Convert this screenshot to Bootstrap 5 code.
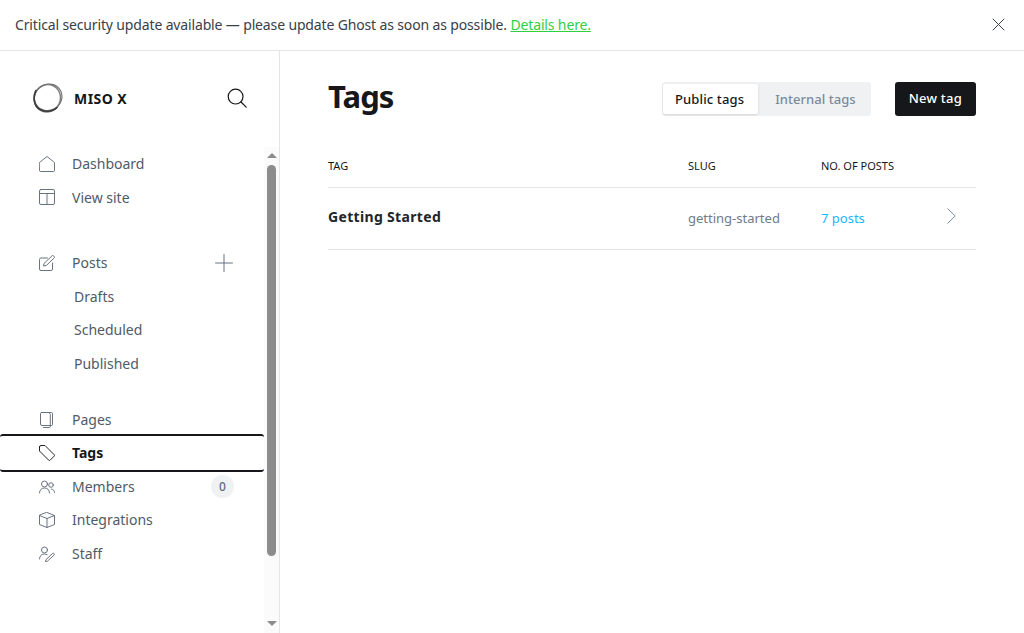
<!DOCTYPE html>
<html lang="en">
<head>
  <meta charset="UTF-8" />
  <meta name="viewport" content="width=device-width, initial-scale=1.0" />
  <title>Tags - MISO X</title>
  <link rel="stylesheet" href="https://cdn.jsdelivr.net/npm/bootstrap@5.3.0/dist/css/bootstrap.min.css" />
  <style>
    html, body {
      height: 100%;
    }
    body {
      font-family: "Noto Sans", "Open Sans", sans-serif;
      font-size: 14px;
      color: #15171a;
      background-color: #fff;
      overflow: hidden;
    }
    svg {
      display: block;
      fill: none;
      stroke-linecap: round;
      stroke-linejoin: round;
    }
    .update-bar {
      height: 51px;
      padding: 0 19px 1px 15px;
      border-bottom: 1px solid #e3e5e7;
      color: #394047;
      letter-spacing: -.145px;
    }
    .update-bar a {
      color: #30cf43;
    }
    .app-shell {
      height: 582px;
    }
    .side-panel {
      width: 280px;
      border-right: 1px solid #e3e5e7;
    }
    .side-inner {
      width: 264px;
    }
    .brand-row {
      height: 95.75px;
      padding: 0 17px 1px 32px;
    }
    .brand-name {
      font-weight: 700;
      font-size: 14px;
      margin-left: 10px;
      letter-spacing: .45px;
    }
    .side-link {
      height: 33.5px;
      padding-left: 39px;
      padding-right: 31px;
      color: #4f5b66;
      text-decoration: none;
    }
    .side-link svg {
      stroke: #626d79;
      stroke-width: .95;
      margin-right: 17px;
      flex: none;
    }
    .side-sub {
      padding-left: 74px;
    }
    .side-link.is-active {
      color: #15171a;
      font-weight: 700;
      border-top: 2px solid #15171a;
      border-bottom: 2px solid #15171a;
      border-radius: 3px;
      height: 37.5px;
      margin: -2px 0;
      padding-bottom: 1px;
      position: relative;
    }
    .side-link.is-active svg {
      stroke: #15171a;
    }
    .side-link.nudge-up {
      padding-bottom: 1px;
    }
    .side-gap {
      height: 32px;
    }
    .side-gap-low {
      height: 23px;
    }
    .count-pill {
      width: 23px;
      height: 23px;
      margin-right: -1px;
      border-radius: 50%;
      background-color: #eff1f3;
      font-size: 12px;
      color: #626d79;
      font-weight: 500;
    }
    .scroll-rail {
      width: 15px;
      margin-top: 96px;
      padding-top: 6px;
      background-color: #fbfbfb;
    }
    .scroll-up {
      width: 0;
      height: 0;
      border-left: 5px solid transparent;
      border-right: 5px solid transparent;
      border-bottom: 5px solid #8c8c8c;
      margin: 0 0 7px 3px;
    }
    .scroll-thumb {
      width: 9px;
      height: 391px;
      border-radius: 5px;
      background-color: #8c8c8c;
      margin-left: 3px;
    }
    .scroll-down {
      width: 0;
      height: 0;
      border-left: 5px solid transparent;
      border-right: 5px solid transparent;
      border-top: 5px solid #8c8c8c;
      margin: 65px 0 0 3px;
    }
    .main-area {
      padding: 31px 48px 0;
    }
    .page-title {
      font-size: 31px;
      font-weight: 700;
      letter-spacing: -.9px;
      line-height: 28px;
      margin: 0;
      align-self: flex-start;
    }
    .type-switch {
      background-color: #eff1f3;
      border-radius: 3px;
      padding: 2px 0 2px 1px;
      height: 34px;
      margin-right: 24px;
      font-size: 13px;
      font-weight: 500;
      letter-spacing: .13px;
    }
    .type-switch span {
      padding: 0 15px 0 17px;
      line-height: 30px;
      color: #7c8b9a;
      letter-spacing: .04px;
    }
    .type-switch span.is-on {
      background-color: #fff;
      color: #15171a;
      border-radius: 2px;
      box-shadow: 0 1px 3px rgba(0,0,0,.12);
      padding: 0 14px 0 12px;
      letter-spacing: .13px;
    }
    .btn.new-tag {
      background-color: #15171a;
      color: #fff;
      height: 34px;
      padding: 0 14px;
      font-size: 13px;
      font-weight: 500;
      letter-spacing: .24px;
      border: 0;
      border-radius: 3px;
    }
    .tag-table {
      table-layout: fixed;
      margin-top: 32px;
      margin-bottom: 0;
      --bs-table-border-color: #e3e5e7;
    }
    .tag-table th {
      font-size: 11px;
      font-weight: 400;
      height: 39px;
      padding: 0 0 2px;
      vertical-align: middle;
      text-transform: uppercase;
      color: #15171a;
    }
    .tag-table td {
      height: 62px;
      padding: 0;
      vertical-align: middle;
    }
    .tag-table td.lift-cell {
      padding-bottom: 4px;
    }
    .tag-name {
      font-size: 14px;
      font-weight: 700;
      letter-spacing: .33px;
    }
    .tag-slug {
      font-size: 13px;
      color: #6f7b88;
    }
    .tag-count {
      font-size: 13px;
      color: #14b8ff;
      text-decoration: none;
    }
    .tag-go svg {
      stroke: #7c8b9a;
      margin-left: auto;
      margin-right: 20px;
    }
  </style>
</head>
<body>
  <div class="update-bar d-flex align-items-center justify-content-between">
    <div>Critical security update available — please update Ghost as soon as possible. <a href="#">Details here.</a></div>
    <svg width="13" height="13" viewBox="0 0 13 13" stroke="#394047" stroke-width="1"><path d="M1 1l11 11M12 1L1 12"/></svg>
  </div>

  <div class="app-shell d-flex">
    <aside class="side-panel d-flex flex-shrink-0">
      <div class="side-inner flex-shrink-0">
        <div class="brand-row d-flex align-items-center">
          <svg width="32" height="32" viewBox="0 0 32 32">
            <ellipse cx="15.500" cy="16.500" rx="13" ry="13.800" stroke="#808080" stroke-width="1.500" transform="rotate(25 16 16)"/>
            <ellipse cx="16.500" cy="15.500" rx="14" ry="13" stroke="#6e6e6e" stroke-width="1.100" transform="rotate(-30 16 16)"/>
            <path d="M4 8.500C.8 14 1.500 24 8 27.500c5 2.700 13 2.500 17-2" stroke="#3d3d3d" stroke-width="1.600"/>
          </svg>
          <span class="brand-name">MISO X</span>
          <svg class="ms-auto" width="20" height="20" viewBox="0 0 20 20" stroke="#15171a" stroke-width="1.2"><circle cx="8.600" cy="8.600" r="7.400"/><path d="M14 14l5.200 5.200"/></svg>
        </div>

        <nav class="d-flex flex-column">
          <a class="side-link d-flex align-items-center" href="#">
            <svg width="16" height="16" viewBox="0 0 16 16"><path d="M.5 6.500L8 .5l7.500 6v8a1 1 0 0 1-1 1h-13a1 1 0 0 1-1-1z"/></svg>Dashboard
          </a>
          <a class="side-link d-flex align-items-center" href="#">
            <svg width="16" height="16" viewBox="0 0 16 16"><rect x=".5" y=".5" width="15" height="15" rx="1.500"/><path d="M.5 4.500h15M8 4.500v11"/></svg>View site
          </a>
          <div class="side-gap"></div>
          <a class="side-link d-flex align-items-center" href="#">
            <svg width="16" height="16" viewBox="0 0 16 16"><path d="M8.500 3H2a1.500 1.500 0 0 0-1.500 1.500v9.500A1.500 1.500 0 0 0 2 15.500h10a1.500 1.500 0 0 0 1.500-1.500V8"/><path d="M7 10.500l-2.500.5.500-2.500L13 .8a1 1 0 0 1 1.500 0l.7.700a1 1 0 0 1 0 1.500z"/></svg>Posts
            <svg class="ms-auto me-0" width="18" height="18" viewBox="0 0 18 18"><path d="M9 .5v17M.5 9h17"/></svg>
          </a>
          <a class="side-link side-sub d-flex align-items-center" href="#">Drafts</a>
          <a class="side-link side-sub d-flex align-items-center" href="#">Scheduled</a>
          <a class="side-link side-sub d-flex align-items-center" href="#">Published</a>
          <div class="side-gap-low"></div>
          <a class="side-link d-flex align-items-center" href="#">
            <svg width="16" height="16" viewBox="0 0 16 16"><path d="M2.500.5h10a1 1 0 0 1 1 1v11a1 1 0 0 1-1 1H3a1.500 1.500 0 0 1-1.500-1.500V1.500a1 1 0 0 1 1-1z"/><path d="M10 .8l1.300 1.400v12.300a1 1 0 0 1-1 1H4.500"/></svg>Pages
          </a>
          <a class="side-link is-active d-flex align-items-center" href="#">
            <svg width="16" height="16" viewBox="0 0 16 16"><path d="M.5 2v4L9.700 15.200a1 1 0 0 0 1.400 0l4.100-4.100a1 1 0 0 0 0-1.400L6 .5H2A1.500 1.500 0 0 0 .5 2z"/></svg>Tags
          </a>
          <a class="side-link d-flex align-items-center" href="#">
            <svg width="16" height="16" viewBox="0 0 16 16"><circle cx="5.500" cy="5" r="3"/><path d="M.5 14c0-3 2-5 5-5s5 2 5 5"/><circle cx="12" cy="6" r="2.300"/><path d="M12.500 10c1.800.2 3 1.800 3 3.500"/></svg>Members
            <span class="count-pill ms-auto d-flex align-items-center justify-content-center">0</span>
          </a>
          <a class="side-link nudge-up d-flex align-items-center" href="#">
            <svg width="16" height="16" viewBox="0 0 16 16"><path d="M8 .5l7.500 3v9L8 15.500.5 12.500v-9z"/><path d="M.5 3.500L8 6.500l7.500-3M8 6.500v9"/></svg>Integrations
          </a>
          <a class="side-link d-flex align-items-center" href="#">
            <svg width="16" height="16" viewBox="0 0 16 16"><circle cx="5.500" cy="4" r="3"/><path d="M.5 13c0-3 2-5 5-5 1 0 2 .2 2.700.7"/><path d="M8 15.300l-1.500.3.300-1.800 6.700-6.300a1 1 0 0 1 1.400 0l.2.200a1 1 0 0 1 0 1.400z"/></svg>Staff
          </a>
        </nav>
      </div>
      <div class="scroll-rail flex-shrink-0">
        <div class="scroll-up"></div>
        <div class="scroll-thumb"></div>
        <div class="scroll-down"></div>
      </div>
    </aside>

    <main class="main-area flex-grow-1">
      <div class="d-flex align-items-center">
        <h1 class="page-title me-auto">Tags</h1>
        <div class="type-switch d-flex">
          <span class="is-on">Public tags</span>
          <span>Internal tags</span>
        </div>
        <button class="btn new-tag" type="button">New tag</button>
      </div>

      <table class="table tag-table">
        <colgroup>
          <col style="width: 360px" />
          <col style="width: 133px" />
          <col style="width: 110px" />
          <col />
        </colgroup>
        <thead>
          <tr>
            <th>Tag</th>
            <th>Slug</th>
            <th>No. of posts</th>
            <th></th>
          </tr>
        </thead>
        <tbody>
          <tr>
            <td class="lift-cell"><span class="tag-name">Getting Started</span></td>
            <td><span class="tag-slug">getting-started</span></td>
            <td><a class="tag-count" href="#">7 posts</a></td>
            <td class="tag-go lift-cell"><svg width="9" height="16" viewBox="0 0 9 16" stroke-width="1"><path d="M.8.800L8.200 8 .8 15.200"/></svg></td>
          </tr>
        </tbody>
      </table>
    </main>
  </div>

  <script src="https://cdn.jsdelivr.net/npm/bootstrap@5.3.0/dist/js/bootstrap.bundle.min.js"></script>
</body>
</html>
